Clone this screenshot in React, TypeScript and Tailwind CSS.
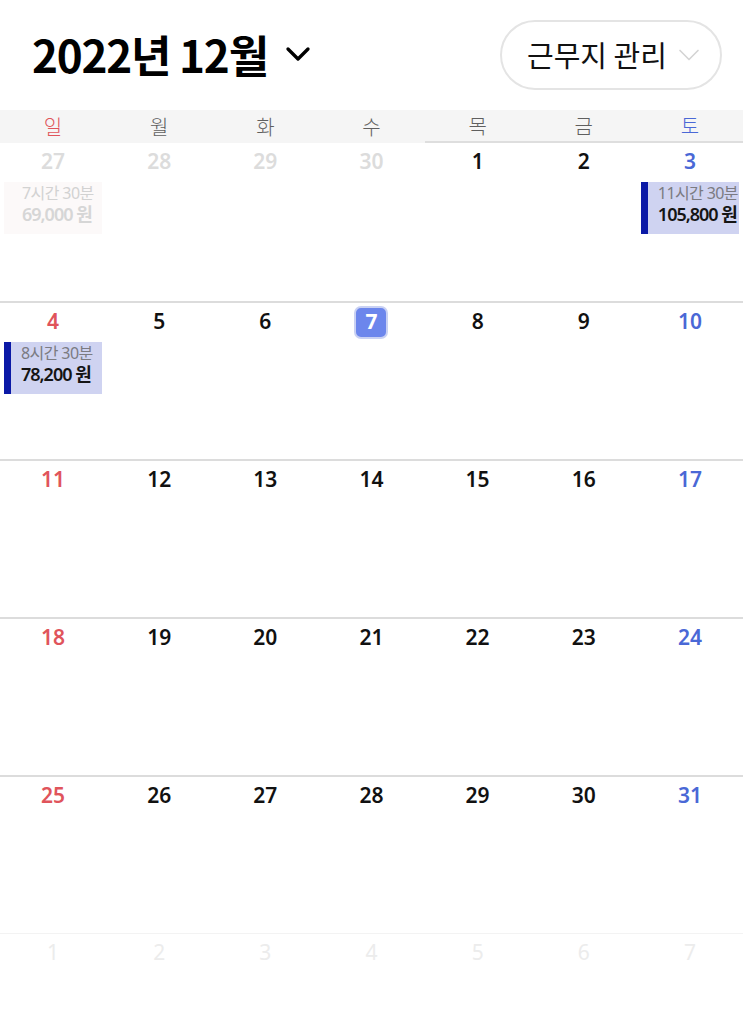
import { ChevronDown } from 'lucide-react';

type Day = {
  n: number;
  muted?: boolean;
  today?: boolean;
};

type Shift = {
  hours: string;
  pay: string;
  faded?: boolean;
};

const WEEKDAYS = ['일', '월', '화', '수', '목', '금', '토'];

const range = (from: number, to: number, muted = false): Day[] =>
  Array.from({ length: to - from + 1 }, (_, i) => ({ n: from + i, muted }));

const weeks: Day[][] = [
  [...range(27, 30, true), ...range(1, 3)],
  range(4, 10).map((d) => (d.n === 7 ? { ...d, today: true } : d)),
  range(11, 17),
  range(18, 24),
  range(25, 31),
];
const nextWeek = range(1, 7, true);

// key = "week-col"
const shifts: Record<string, Shift> = {
  '0-0': { hours: '7시간 30분', pay: '69,000 원', faded: true },
  '0-6': { hours: '11시간 30분', pay: '105,800 원' },
  '1-0': { hours: '8시간 30분', pay: '78,200 원' },
};

function dayColor(col: number, muted?: boolean) {
  if (muted) return 'text-[#dcdcdc]';
  if (col === 0) return 'text-[#e0545b]';
  if (col === 6) return 'text-[#4a68d6]';
  return 'text-[#111]';
}

function ShiftCard({ shift }: { shift: Shift }) {
  if (shift.faded) {
    return (
      <div className="mx-[4px] mt-[4px] h-[52px] bg-[#fcf9f9] pl-[18px] pt-[2px] overflow-hidden">
        <div className="text-[16px] leading-[19px] text-[#d2d2d2] tracking-[-0.6px] whitespace-nowrap">{shift.hours}</div>
        <div className="text-[18px] leading-[23px] font-semibold text-[#d6d6d6] tracking-[-1px] whitespace-nowrap">{shift.pay}</div>
      </div>
    );
  }
  return (
    <div className="mx-[4px] mt-[4px] h-[52px] bg-[#cfd3f1] flex overflow-hidden">
      <div className="w-[7px] shrink-0 bg-[#0b19a6]" />
      <div className="pl-[10px] pt-[2px] min-w-0">
        <div className="text-[16px] leading-[19px] text-[#7b7b82] tracking-[-0.6px] whitespace-nowrap">{shift.hours}</div>
        <div className="text-[18px] leading-[23px] font-semibold text-[#151515] tracking-[-1px] whitespace-nowrap">{shift.pay}</div>
      </div>
    </div>
  );
}

export default function App() {
  return (
    <div
      className="w-[743px] h-[1024px] bg-white overflow-hidden"
      style={{ fontFamily: '"Noto Sans", "Noto Sans CJK KR", sans-serif' }}
    >
      {/* header */}
      <div className="h-[110px] flex items-center justify-between pl-[32px] pr-[21px]">
        <div className="flex items-center gap-[10px] pb-[2px]">
          <h1
            className="text-[44px] font-bold text-black tracking-[-1.2px] leading-none"
            style={{ fontFamily: '"Noto Sans CJK KR", sans-serif' }}
          >
            2022년 12월
          </h1>
          <ChevronDown className="w-[40px] h-[40px] text-black" strokeWidth={2} />
        </div>
        <button className="h-[70px] w-[222px] rounded-full border-2 border-[#e4e4e4] flex items-center pl-[25px] gap-[4px] bg-white">
          <span
            className="text-[29px] text-[#111]"
            style={{ fontFamily: '"Noto Sans CJK KR", sans-serif' }}
          >
            근무지 관리
          </span>
          <ChevronDown className="w-[36px] h-[36px] text-[#d4d4d4]" strokeWidth={1.1} />
        </button>
      </div>

      {/* weekday row */}
      <div className="grid grid-cols-7 h-[33px] bg-[#f5f5f5]">
        {WEEKDAYS.map((w, i) => (
          <div
            key={w}
            className={`flex items-center justify-center text-[20px] font-light ${
              i === 0 ? 'text-[#e0545b]' : i === 6 ? 'text-[#4a68d6]' : 'text-[#5f5f5f]'
            } ${i >= 4 ? 'border-b-2 border-[#dedede]' : ''}`}
            style={{ fontFamily: '"Noto Sans CJK KR", sans-serif' }}
          >
            {w}
          </div>
        ))}
      </div>

      {/* weeks */}
      {weeks.map((week, wi) => (
        <div
          key={wi}
          className={`grid grid-cols-7 h-[158px] ${wi === 0 ? 'h-[157px]' : 'border-t-2 border-[#dcdcdc]'}`}
        >
          {week.map((d, ci) => {
            const shift = shifts[`${wi}-${ci}`];
            return (
              <div key={ci} className="flex flex-col pt-[3px]">
                <div className="h-[32px] flex items-center justify-center">
                  {d.today ? (
                    <span className="w-[34px] h-[33px] rounded-[7px] bg-[#6c86ec] border-2 border-[#c9d1f3] flex items-center justify-center text-white text-[21px] font-bold">
                      {d.n}
                    </span>
                  ) : (
                    <span className={`text-[21px] font-semibold ${dayColor(ci, d.muted)}`}>{d.n}</span>
                  )}
                </div>
                {shift && <ShiftCard shift={shift} />}
              </div>
            );
          })}
        </div>
      ))}

      {/* next month, faded */}
      <div className="grid grid-cols-7 h-[120px] border-t border-[#f3f3f3]">
        {nextWeek.map((d) => (
          <div key={d.n} className="flex justify-center pt-[3px]">
            <span className="h-[32px] flex items-center text-[21px] text-[#ececec]">{d.n}</span>
          </div>
        ))}
      </div>
    </div>
  );
}
